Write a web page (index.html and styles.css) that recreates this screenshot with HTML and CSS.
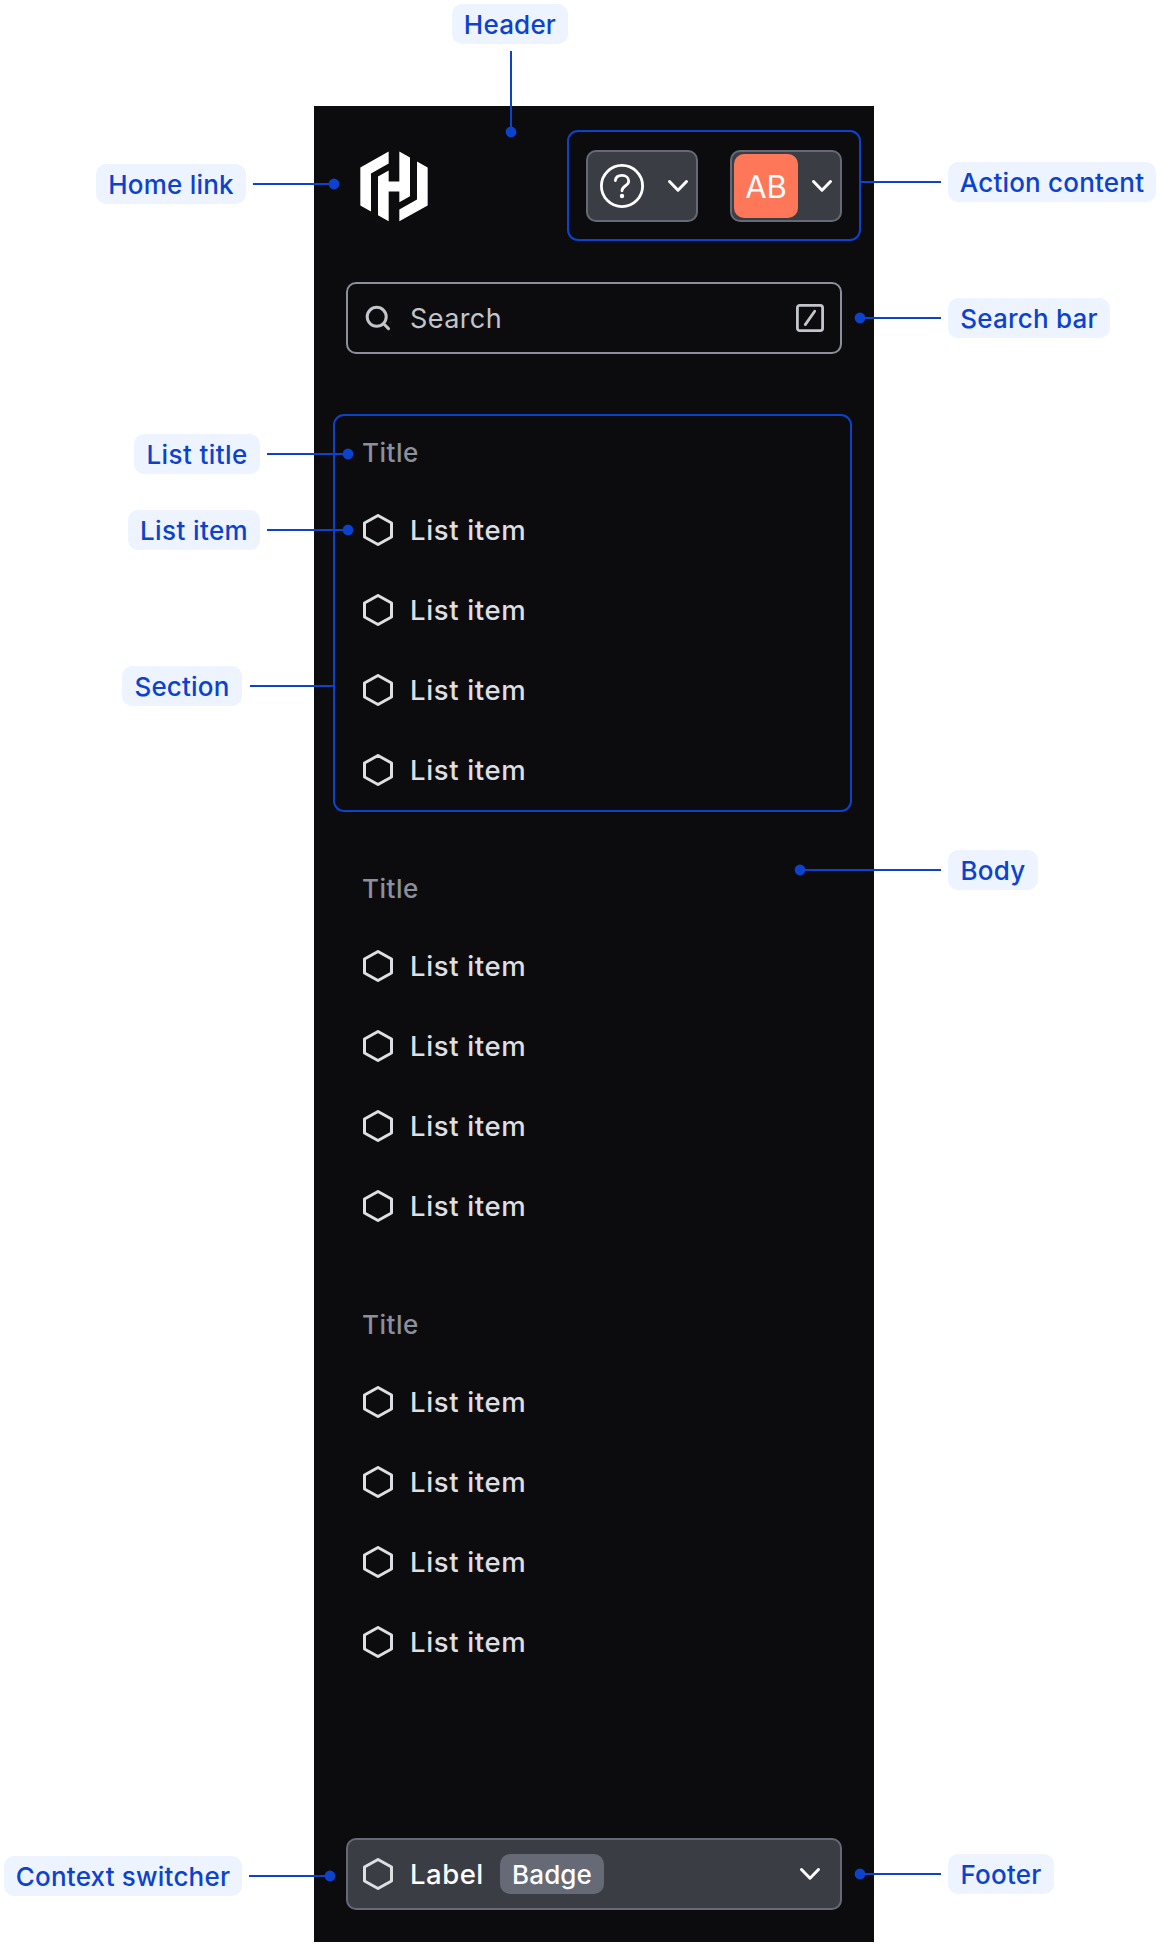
FILE: index.html
```html
<!DOCTYPE html>
<html lang="en">
<head>
<meta charset="utf-8">
<title>Side navigation anatomy</title>
<link rel="stylesheet" href="styles.css">
</head>
<body>
<svg class="sprite" aria-hidden="true">
  <symbol id="hexagon" viewBox="0 0 32 32"><path d="M16 1.5 29.5 9V23L16 30.5 2.500 23V9Z" fill="none" stroke="currentColor" stroke-width="3" stroke-linejoin="round"/></symbol>
  <symbol id="chevron" viewBox="0 0 24 24"><path d="M3.500 7.500 12 16.200 20.500 7.500" fill="none" stroke="currentColor" stroke-width="3" stroke-linecap="round" stroke-linejoin="round"/></symbol>
</svg>
<main class="anatomy">
  <aside class="sidenav">
    <header class="top">
      <a class="home" aria-label="Home"><svg viewBox="180 182 204 212" width="68" height="71"><path fill="currentColor" d="M266 183 181 231V345L213 363V249L266 219ZM298 183V273H266V240L234 258V374L266 392V303H298V335L330 317V201ZM351 213 383 231V345L298 392V357L351 327Z"/></svg></a>
      <div class="actions">
        <button class="control help" aria-label="Help"><svg width="44" height="44" viewBox="0 0 44 44" fill="none" stroke="currentColor" stroke-width="2.800" stroke-linecap="round"><circle cx="22" cy="22" r="20.600"/><path d="M15.300 16.500C15.700 13.400 18.300 11.400 22 11.400C25.800 11.400 28.700 13.800 28.700 17.200C28.700 22 22 21.500 22 26.800"/><circle cx="22" cy="32" r="2.200" fill="currentColor" stroke="none"/></svg><svg class="chevron"><use href="#chevron"/></svg></button>
        <button class="control user"><span class="avatar">AB</span><svg class="chevron"><use href="#chevron"/></svg></button>
      </div>
    </header>
    <div class="search">
      <svg width="32" height="32" viewBox="0 0 32 32" fill="none" stroke="currentColor" stroke-width="3" stroke-linecap="round"><circle cx="14.700" cy="14.800" r="9.500"/><path d="M21.700 21.800 26.500 26.600"/></svg>
      <span class="search-text">Search</span>
      <svg width="28" height="28" viewBox="0 0 28 28" fill="none" stroke="currentColor" stroke-width="2.800" stroke-linecap="round"><rect x="1.400" y="1.400" width="25.200" height="25.200" rx="2.400"/><path d="M9.300 20.600 18.700 7.200"/></svg>
    </div>
    <nav class="sections">
      <section class="section"><h2>Title</h2><ul>
        <li><svg class="hex"><use href="#hexagon"/></svg>List item</li>
        <li><svg class="hex"><use href="#hexagon"/></svg>List item</li>
        <li><svg class="hex"><use href="#hexagon"/></svg>List item</li>
        <li><svg class="hex"><use href="#hexagon"/></svg>List item</li></ul></section>
      <section class="section"><h2>Title</h2><ul>
        <li><svg class="hex"><use href="#hexagon"/></svg>List item</li>
        <li><svg class="hex"><use href="#hexagon"/></svg>List item</li>
        <li><svg class="hex"><use href="#hexagon"/></svg>List item</li>
        <li><svg class="hex"><use href="#hexagon"/></svg>List item</li></ul></section>
      <section class="section"><h2>Title</h2><ul>
        <li><svg class="hex"><use href="#hexagon"/></svg>List item</li>
        <li><svg class="hex"><use href="#hexagon"/></svg>List item</li>
        <li><svg class="hex"><use href="#hexagon"/></svg>List item</li>
        <li><svg class="hex"><use href="#hexagon"/></svg>List item</li></ul></section>
    </nav>
    <footer class="control switcher"><svg class="hex"><use href="#hexagon"/></svg><span class="switcher-label">Label</span><span class="badge">Badge</span><svg class="chevron"><use href="#chevron"/></svg></footer>
  </aside>

  <div class="frame frame-actions"></div>
  <div class="frame frame-section"></div>
  <svg class="leaders" width="1160" height="1944" aria-hidden="true">
    <path d="M511 51V132M253 184H334M861 182H941M860 318H941M267 454H348M267 530H348M250 686H334M800 870H941M249 1876H330M860 1874H941"/>
    <circle cx="511" cy="132" r="5.400"/><circle cx="334" cy="184" r="5.400"/><circle cx="860" cy="318" r="5.400"/><circle cx="348" cy="454" r="5.400"/><circle cx="348" cy="530" r="5.400"/><circle cx="800" cy="870" r="5.400"/><circle cx="330" cy="1876" r="5.400"/><circle cx="860" cy="1874" r="5.400"/>
  </svg>
  <span class="note note-header">Header</span>
  <span class="note note-home">Home link</span>
  <span class="note note-action">Action content</span>
  <span class="note note-search">Search bar</span>
  <span class="note note-title">List title</span>
  <span class="note note-item">List item</span>
  <span class="note note-section">Section</span>
  <span class="note note-body">Body</span>
  <span class="note note-context">Context switcher</span>
  <span class="note note-footer">Footer</span>
</main>
</body>
</html>
```
FILE: styles.css
```css
* { box-sizing: border-box; }
body { margin: 0; background: #fff; font-family: Inter, "Liberation Sans", sans-serif; }
svg { display: block; flex: none; }
.sprite { position: absolute; width: 0; height: 0; }
.anatomy { position: relative; width: 1160px; height: 1944px; padding: 106px 286px 2px 314px; overflow: hidden; }

.sidenav { display: flex; flex-direction: column; height: 1836px; padding: 44px 32px 32px; background: #0c0c0e; color: #dedfe3; font-size: 27.5px; font-weight: 500; letter-spacing: .65px; }
.top { display: flex; justify-content: space-between; height: 72px; }
.home { padding: 1px 0 0 14px; color: #fff; }
.actions { display: flex; gap: 32px; }
.control { display: flex; align-items: center; height: 72px; background: #3b3d45; border: 2px solid #656a76; border-radius: 10px; color: #fff; font: inherit; letter-spacing: inherit; }
.chevron { width: 24px; height: 24px; margin-left: auto; }
.help { width: 112px; padding: 0 6px 0 12px; }
.user { width: 112px; padding: 0 6px 0 2px; }
.avatar { width: 64px; height: 64px; border-radius: 10px; background: #ff7759; font-size: 31px; font-weight: 400; line-height: 66px; letter-spacing: -.2px; text-align: center; }

.search { display: flex; align-items: center; height: 72px; margin-top: 60px; padding: 0 16px 0 14px; border: 2px solid #8c909c; border-radius: 10px; color: #c2c5cb; font-size: 27px; font-weight: 400; letter-spacing: .4px; }
.search-text { flex: 1; margin-left: 16px; }

.sections { display: flex; flex-direction: column; gap: 48px; margin-top: 68px; }
.section { height: 388px; padding-left: 16px; }
.section h2 { height: 68px; margin: 0; color: #8c909c; font-size: 26px; font-weight: 500; line-height: 62px; letter-spacing: .5px; }
.section ul { margin: 0; padding: 0; list-style: none; }
.section li { display: flex; align-items: center; gap: 16px; height: 80px; }
.hex { width: 32px; height: 32px; color: #dedfe3; }
.switcher { margin-top: auto; padding: 0 18px 0 14px; }
.switcher-label { width: 74px; margin-left: 16px; letter-spacing: .5px; }
.badge { width: 104px; height: 40px; margin-left: 16px; border-radius: 10px; background: #656a76; font-size: 26px; line-height: 41px; letter-spacing: .1px; text-align: center; }

/* Annotations sit over the navigation */
.frame { position: absolute; border: 2px solid #0c42cc; border-radius: 11px; }
.frame-actions { left: 567px; top: 130px; width: 294px; height: 111px; }
.frame-section { left: 333px; top: 414px; width: 519px; height: 398px; }
.leaders { position: absolute; left: 0; top: 0; fill: #0c42cc; stroke: none; }
.leaders path { stroke: #0c42cc; stroke-width: 2; fill: none; }
.note { position: absolute; height: 40px; border-radius: 10px; background: #edf4ff; color: #0c42cc; font-size: 26px; font-weight: 500; line-height: 42px; letter-spacing: .2px; text-align: center; white-space: nowrap; }
.note-header { left: 452px; top: 4px; width: 116px; }
.note-home { left: 96px; top: 164px; width: 150px; }
.note-action { left: 948px; top: 162px; width: 208px; }
.note-search { left: 948px; top: 298px; width: 162px; }
.note-title { left: 134px; top: 434px; width: 126px; letter-spacing: .4px; }
.note-item { left: 128px; top: 510px; width: 132px; letter-spacing: .4px; }
.note-section { left: 122px; top: 666px; width: 120px; }
.note-body { left: 948px; top: 850px; width: 90px; }
.note-context { left: 4px; top: 1856px; width: 238px; }
.note-footer { left: 948px; top: 1854px; width: 106px; }
```
